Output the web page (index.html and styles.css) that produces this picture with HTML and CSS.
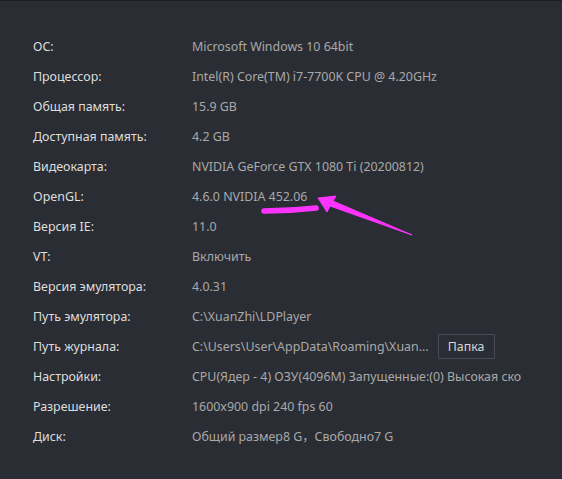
FILE: index.html
```html
<!DOCTYPE html>
<html>
<head>
    <link rel="stylesheet" href="styles.css">
</head>
<body>
    <div class="info">
        <div class="row"><span class="label">ОС:</span><span class="value">Microsoft Windows 10 64bit</span></div>
        <div class="row"><span class="label">Процессор:</span><span class="value">Intel(R) Core(TM) i7-7700K CPU @ 4.20GHz</span></div>
        <div class="row"><span class="label">Общая память:</span><span class="value">15.9 GB</span></div>
        <div class="row"><span class="label">Доступная память:</span><span class="value">4.2 GB</span></div>
        <div class="row"><span class="label">Видеокарта:</span><span class="value">NVIDIA GeForce GTX 1080 Ti (20200812)</span></div>
        <div class="row"><span class="label">OpenGL:</span><span class="value">4.6.0 NVIDIA 452.06</span></div>
        <div class="row"><span class="label">Версия IE:</span><span class="value">11.0</span></div>
        <div class="row"><span class="label">VT:</span><span class="value">Включить</span></div>
        <div class="row"><span class="label">Версия эмулятора:</span><span class="value">4.0.31</span></div>
        <div class="row"><span class="label">Путь эмулятора:</span><span class="value">C:\XuanZhi\LDPlayer</span></div>
        <div class="row">
            <span class="label">Путь журнала:</span>
            <span class="value">C:\Users\User\AppData\Roaming\Xuan...</span>
            <button class="folder-button">Папка</button>
        </div>
        <div class="row"><span class="label">Настройки:</span><span class="value">CPU(Ядер - 4) ОЗУ(4096M) Запущенные:(0) Высокая ско</span></div>
        <div class="row"><span class="label">Разрешение:</span><span class="value">1600x900 dpi 240 fps 60</span></div>
        <div class="row"><span class="label">Диск:</span><span class="value">Общий размер8 G，Свободно7 G</span></div>
    </div>

    <!-- hand drawn marker over the OpenGL row -->
    <svg class="marker" width="562" height="479" viewBox="0 0 562 479">
        <path d="M264 211 Q290 211 316 208" stroke="#ff33ff" stroke-width="5.5" stroke-linecap="round" fill="none"/>
        <path d="M318 198 L336 196 L333 201 L412 235 L330 206 L327 212 Z" fill="#ff33ff" stroke="#ff33ff" stroke-width="1" stroke-linejoin="round"/>
    </svg>
</body>
</html>
```

FILE: styles.css
```css
body {
    margin: 0;
    padding: 0;
    height: 478px;
    background-color: #2a2d33;
    border-top: 1px solid #1c1e22;
    font-family: "Noto Sans", "Open Sans", "Noto Sans CJK SC", sans-serif;
    font-size: 12.4px;
    overflow: hidden;
}

.info {
    padding: 30px 0 0 33px;
}

.row {
    display: flex;
    align-items: center;
    height: 30px;
}

.label {
    width: 159px;
    flex-shrink: 0;
    color: #dedede;
}

.value {
    color: #a9a9a9;
    white-space: nowrap;
}

.folder-button {
    margin-left: 9px;
    height: 25px;
    width: 57px;
    padding: 0;
    background-color: #2a2d33;
    color: #d6d6d6;
    border: 1px solid #494c56;
    border-radius: 1px;
    font-family: inherit;
    font-size: 12.4px;
    cursor: pointer;
}

.marker {
    position: absolute;
    left: 0;
    top: 0;
    pointer-events: none;
}
```
